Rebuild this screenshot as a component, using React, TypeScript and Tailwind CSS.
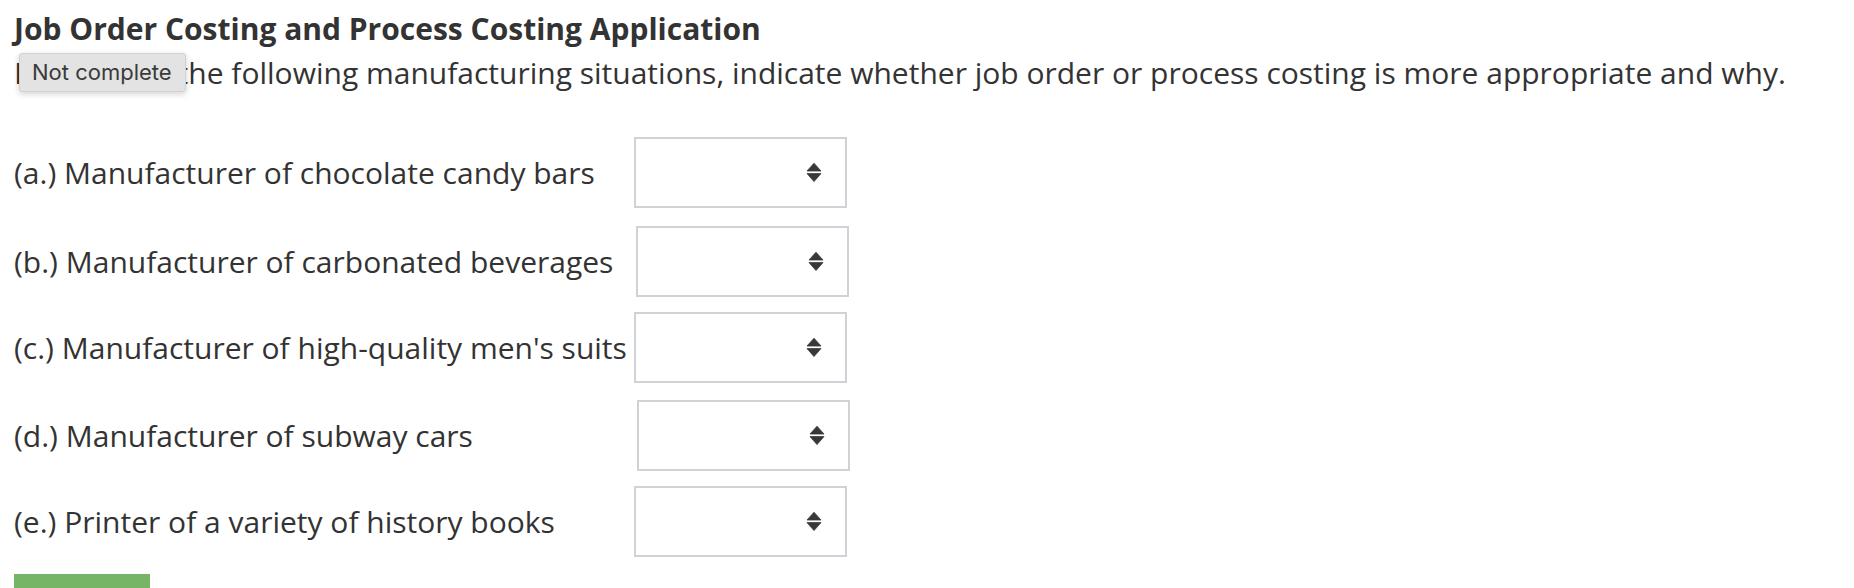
import React from "react";

const rows: { label: string; shift: string; mt: string }[] = [
  { label: "(a.) Manufacturer of chocolate candy bars", shift: "ml-0", mt: "mt-0" },
  { label: "(b.) Manufacturer of carbonated beverages", shift: "ml-[2px]", mt: "mt-[18px]" },
  { label: "(c.) Manufacturer of high-quality men's suits", shift: "ml-0", mt: "mt-[15px]" },
  { label: "(d.) Manufacturer of subway cars", shift: "ml-[3px]", mt: "mt-[17px]" },
  { label: "(e.) Printer of a variety of history books", shift: "ml-0", mt: "mt-[15px]" },
];

function SortIcon() {
  return (
    <svg width="16" height="21" viewBox="0 0 16 21" className="block">
      <path d="M1 9 L8 1.2 L15 9 Z" fill="#383838" stroke="#383838" strokeWidth="0.8" strokeLinejoin="round" />
      <path d="M1 11.6 L15 11.6 L8 19.6 Z" fill="#383838" stroke="#383838" strokeWidth="0.8" strokeLinejoin="round" />
    </svg>
  );
}

export default function App() {
  return (
    <div
      className="relative w-[1854px] h-[588px] overflow-hidden bg-white text-[#333333]"
      style={{ fontFamily: '"Open Sans", "Noto Sans", sans-serif' }}
    >
      <div className="pl-[14px] pt-[8px]">
        <h1 className="text-[30px] leading-[41px] font-bold text-[#333333]">
          Job Order Costing and Process Costing Application
        </h1>
        <p className="text-[30px] leading-[41px] mt-[3px]">
          For each of the following manufacturing situations, indicate whether job order or process costing is more appropriate and why.
        </p>

        <div className="mt-[44px] flex flex-col">
          {rows.map((r) => (
            <div key={r.label} className={`flex items-center ${r.mt}`}>
              <div className="w-[620px] text-[30px] leading-[41px] whitespace-nowrap">{r.label}</div>
              <div
                className={`${r.shift} w-[213px] h-[71px] border-2 border-[#cfd3d7] bg-white flex items-center justify-end pr-[23px]`}
              >
                <SortIcon />
              </div>
            </div>
          ))}
        </div>

        <div className="mt-[17px] w-[136px] h-[30px] bg-[#77b566]" />
      </div>

      <div
        className="absolute left-[19px] top-[53px] w-[167px] h-[39px] bg-[#e3e3e3] border border-[#d2d2d2] rounded-[3px] shadow-[0_2px_6px_rgba(0,0,0,0.18)] flex items-center pl-[12px] text-[22px] text-[#3a3a3a]"
        style={{ fontFamily: 'Inter, "Liberation Sans", sans-serif' }}
      >
        Not complete
      </div>
    </div>
  );
}
